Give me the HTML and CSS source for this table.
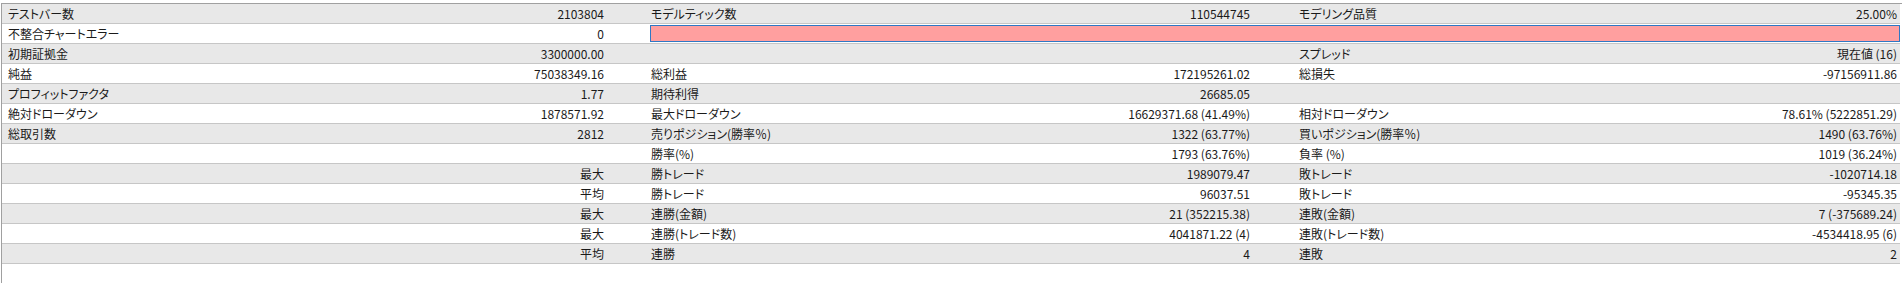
FILE: index.html
```html
<!DOCTYPE html>
<html lang="ja">
<head>
<meta charset="utf-8">
<link rel="stylesheet" href="styles.css">
</head>
<body>
<div class="report">
  <div class="row"><span class="l">テストバー数</span><span class="v">2103804</span><span class="l l2">モデルティック数</span><span class="v v2">110544745</span><span class="l l3">モデリング品質</span><span class="v v3">25.00%</span></div>
  <div class="row"><span class="l">不整合チャートエラー</span><span class="v">0</span><span class="bar-cell"><span class="bar"></span></span></div>
  <div class="row"><span class="l">初期証拠金</span><span class="v">3300000.00</span><span class="l l2"></span><span class="v v2"></span><span class="l l3">スプレッド</span><span class="v v3">現在値 (16)</span></div>
  <div class="row"><span class="l">純益</span><span class="v">75038349.16</span><span class="l l2">総利益</span><span class="v v2">172195261.02</span><span class="l l3">総損失</span><span class="v v3">-97156911.86</span></div>
  <div class="row"><span class="l">プロフィットファクタ</span><span class="v">1.77</span><span class="l l2">期待利得</span><span class="v v2">26685.05</span><span class="l l3"></span><span class="v v3"></span></div>
  <div class="row"><span class="l">絶対ドローダウン</span><span class="v">1878571.92</span><span class="l l2">最大ドローダウン</span><span class="v v2">16629371.68 (41.49%)</span><span class="l l3">相対ドローダウン</span><span class="v v3">78.61% (5222851.29)</span></div>
  <div class="row"><span class="l">総取引数</span><span class="v">2812</span><span class="l l2">売りポジション(勝率％)</span><span class="v v2">1322 (63.77%)</span><span class="l l3">買いポジション(勝率％)</span><span class="v v3">1490 (63.76%)</span></div>
  <div class="row"><span class="l"></span><span class="v"></span><span class="l l2">勝率(%)</span><span class="v v2">1793 (63.76%)</span><span class="l l3">負率 (%)</span><span class="v v3">1019 (36.24%)</span></div>
  <div class="row"><span class="l"></span><span class="v">最大</span><span class="l l2">勝トレード</span><span class="v v2">1989079.47</span><span class="l l3">敗トレード</span><span class="v v3">-1020714.18</span></div>
  <div class="row"><span class="l"></span><span class="v">平均</span><span class="l l2">勝トレード</span><span class="v v2">96037.51</span><span class="l l3">敗トレード</span><span class="v v3">-95345.35</span></div>
  <div class="row"><span class="l"></span><span class="v">最大</span><span class="l l2">連勝(金額)</span><span class="v v2">21 (352215.38)</span><span class="l l3">連敗(金額)</span><span class="v v3">7 (-375689.24)</span></div>
  <div class="row"><span class="l"></span><span class="v">最大</span><span class="l l2">連勝(トレード数)</span><span class="v v2">4041871.22 (4)</span><span class="l l3">連敗(トレード数)</span><span class="v v3">-4534418.95 (6)</span></div>
  <div class="row"><span class="l"></span><span class="v">平均</span><span class="l l2">連勝</span><span class="v v2">4</span><span class="l l3">連敗</span><span class="v v3">2</span></div>
</div>
</body>
</html>
```

FILE: styles.css
```css
html, body {
  margin: 0;
  padding: 0;
  background: #ffffff;
}

body {
  font-family: "Noto Sans CJK JP", "Noto Sans", sans-serif;
  font-size: 12px;
  font-feature-settings: "palt";
  color: #1a1a1a;
}

.report {
  margin: 3px 0 0 1px;
  border-top: 1px solid #a0a0a0;
  border-left: 1px solid #a0a0a0;
  height: 280px;
  box-sizing: border-box;
}

.row {
  display: grid;
  grid-template-columns: 298px 347px 303px 345px 305px 300px;
  width: 1898px;
  height: 20px;
  box-sizing: border-box;
  border-bottom: 1px solid #c6c6c6;
  line-height: 19px;
  background: #ffffff;
}

.row:nth-child(odd) {
  background: #e8e8e8;
}

.l, .v {
  white-space: nowrap;
  overflow: hidden;
}

.l {
  padding-left: 6px;
}

.l2, .l3 {
  padding-left: 4px;
}

.v {
  text-align: right;
  padding-right: 43px;
}

.v2 {
  padding-right: 45px;
}

.v3 {
  padding-right: 3px;
}

.bar-cell {
  grid-column: 3 / 7;
  padding-left: 3px;
  display: flex;
  align-items: flex-start;
}

.bar {
  display: block;
  flex: 1;
  height: 17px;
  margin-top: 1px;
  box-sizing: border-box;
  background: #ff9f9f;
  border: 1px solid #2f78c4;
}
```
